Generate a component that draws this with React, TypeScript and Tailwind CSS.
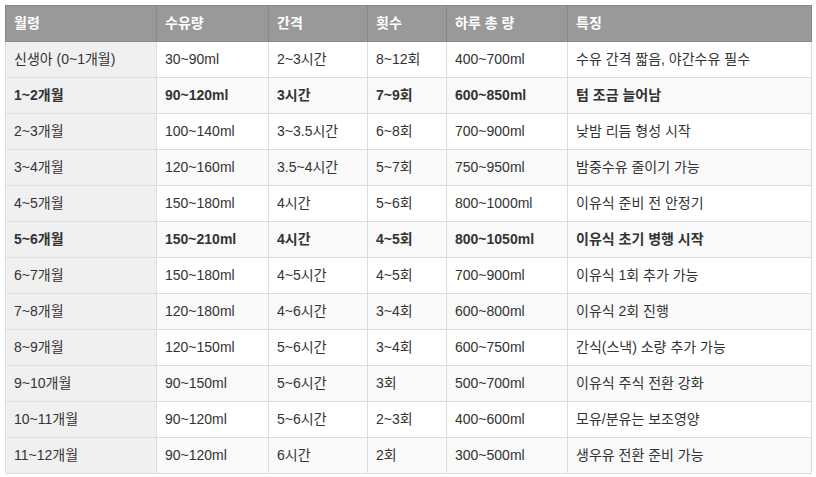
const HEAD = ["월령", "수유량", "간격", "횟수", "하루 총 량", "특징"];

const ROWS: { cells: string[]; bold?: boolean }[] = [
  { cells: ["신생아 (0~1개월)", "30~90ml", "2~3시간", "8~12회", "400~700ml", "수유 간격 짧음, 야간수유 필수"] },
  { cells: ["1~2개월", "90~120ml", "3시간", "7~9회", "600~850ml", "텀 조금 늘어남"], bold: true },
  { cells: ["2~3개월", "100~140ml", "3~3.5시간", "6~8회", "700~900ml", "낮밤 리듬 형성 시작"] },
  { cells: ["3~4개월", "120~160ml", "3.5~4시간", "5~7회", "750~950ml", "밤중수유 줄이기 가능"] },
  { cells: ["4~5개월", "150~180ml", "4시간", "5~6회", "800~1000ml", "이유식 준비 전 안정기"] },
  { cells: ["5~6개월", "150~210ml", "4시간", "4~5회", "800~1050ml", "이유식 초기 병행 시작"], bold: true },
  { cells: ["6~7개월", "150~180ml", "4~5시간", "4~5회", "700~900ml", "이유식 1회 추가 가능"] },
  { cells: ["7~8개월", "120~180ml", "4~6시간", "3~4회", "600~800ml", "이유식 2회 진행"] },
  { cells: ["8~9개월", "120~150ml", "5~6시간", "3~4회", "600~750ml", "간식(스낵) 소량 추가 가능"] },
  { cells: ["9~10개월", "90~150ml", "5~6시간", "3회", "500~700ml", "이유식 주식 전환 강화"] },
  { cells: ["10~11개월", "90~120ml", "5~6시간", "2~3회", "400~600ml", "모유/분유는 보조영양"] },
  { cells: ["11~12개월", "90~120ml", "6시간", "2회", "300~500ml", "생우유 전환 준비 가능"] },
];

const WIDTHS = ["w-[151px]", "w-[112px]", "w-[99px]", "w-[79px]", "w-[121px]", "w-[244px]"];

export default function App() {
  return (
    <div className="min-h-[477px] bg-white px-[5px] pt-[5px] font-['Liberation_Sans','Noto_Sans_CJK_KR',sans-serif] text-[14px] text-[#333]">
      <table className="w-[806px] table-fixed border-collapse">
        <colgroup>
          {WIDTHS.map((w, i) => (
            <col key={i} className={w} />
          ))}
        </colgroup>
        <thead>
          <tr className="h-[36px] bg-[#999]">
            {HEAD.map((h) => (
              <th key={h} className="border border-[#888] px-2 text-left font-bold text-white">
                {h}
              </th>
            ))}
          </tr>
        </thead>
        <tbody>
          {ROWS.map((row, r) => (
            <tr key={r} className={`h-[36px] ${r % 2 === 1 ? "bg-[#f9f9f9]" : "bg-white"} ${row.bold ? "font-bold" : ""}`}>
              {row.cells.map((c, i) => (
                <td
                  key={i}
                  className={`border border-[#ddd] px-2 whitespace-nowrap ${i === 0 ? "bg-[#f0f0f0]" : ""}`}
                >
                  {c}
                </td>
              ))}
            </tr>
          ))}
        </tbody>
      </table>
    </div>
  );
}
